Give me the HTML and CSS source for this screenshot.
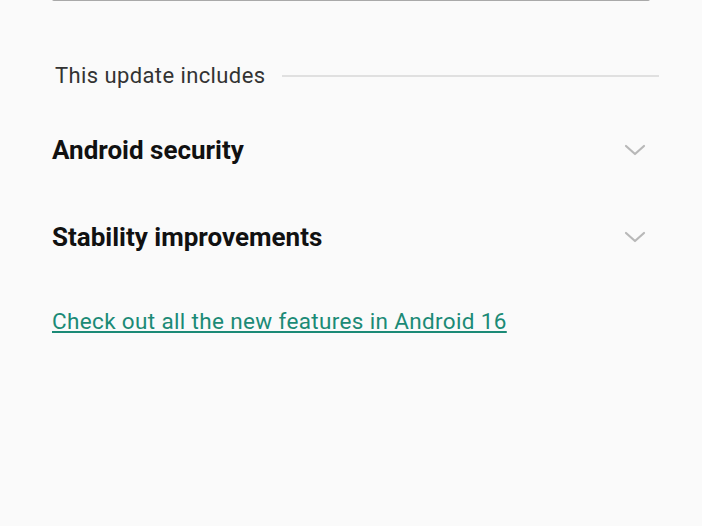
FILE: index.html
```html
<!DOCTYPE html>
<html lang="en">
<head>
    <meta charset="UTF-8">
    <meta name="viewport" content="width=device-width, initial-scale=1.0">
    <title>Software update</title>
    <link rel="stylesheet" href="styles.css">
</head>
<body>
    <div class="screen">
        <div class="top-card"></div>

        <div class="section-title">
            <span>This update includes</span>
            <div class="rule"></div>
        </div>

        <div class="items">
            <div class="item">
                <span class="item-title">Android security</span>
                <svg class="chevron" width="22" height="14" viewBox="0 0 22 14">
                    <polyline points="2,3 11,11 20,3" fill="none" stroke="#b8b8b8" stroke-width="2.2" stroke-linecap="round" stroke-linejoin="round"/>
                </svg>
            </div>
            <div class="item">
                <span class="item-title">Stability improvements</span>
                <svg class="chevron" width="22" height="14" viewBox="0 0 22 14">
                    <polyline points="2,3 11,11 20,3" fill="none" stroke="#b8b8b8" stroke-width="2.2" stroke-linecap="round" stroke-linejoin="round"/>
                </svg>
            </div>
        </div>

        <a class="features-link" href="#">Check out all the new features in Android 16</a>
    </div>
</body>
</html>
```

FILE: styles.css
```css
/* Pantalla de actualización */
body {
    margin: 0;
    background: #fafafa;
    font-family: Roboto, "Noto Sans", sans-serif;
}

.screen {
    width: 702px;
    height: 526px;
    overflow: hidden;
}

/* Borde inferior de la tarjeta de arriba */
.top-card {
    height: 2px;
    margin: -1px 52px 0 52px;
    background: #a9a9a9;
    border-radius: 0 0 6px 6px;
}

.section-title {
    display: flex;
    align-items: center;
    gap: 16px;
    margin: 62px 43px 0 55px;
    font-size: 22px;
    letter-spacing: 0.4px;
    color: #333;
}

.rule {
    flex: 1;
    height: 2px;
    background: #e0e0e0;
}

.items {
    margin: 18px 56px 0 52px;
}

.item {
    display: flex;
    align-items: center;
    justify-content: space-between;
    height: 87px;
}

.item-title {
    font-size: 26px;
    font-weight: bold;
    color: #111;
}

.chevron {
    display: block;
}

.features-link {
    display: inline-block;
    margin: 28px 0 0 52px;
    font-size: 22.5px;
    letter-spacing: 0.35px;
    color: #1b8a76;
}
```
